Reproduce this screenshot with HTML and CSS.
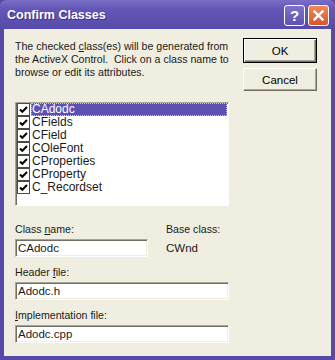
FILE: index.html
```html
<!DOCTYPE html>
<html lang="en">
<head>
  <meta charset="UTF-8" />
  <title>Confirm Classes</title>
  <link rel="stylesheet" href="styles.css">
</head>
<body>

<div class="window">
  <div class="titlebar">
    <span class="title">Confirm Classes</span>
    <div class="caption-btns">
      <span class="cbtn help">?</span>
      <span class="cbtn close">
        <svg width="11" height="11" viewBox="0 0 11 11"><path d="M1.5 1.5 L9.5 9.5 M9.5 1.5 L1.5 9.5" stroke="#fff" stroke-width="2.4" stroke-linecap="square"/></svg>
      </span>
    </div>
  </div>

  <div class="client">
    <div class="main">
      <p class="intro">The checked <u>c</u>lass(es) will be generated from<br>the ActiveX Control.&nbsp; Click on a class name to<br>browse or edit its attributes.</p>

      <div class="listbox">
        <div class="row"><span class="check"><svg width="11" height="11" viewBox="0 0 11 11"><path d="M2 5.5 L4.3 7.8 L9 3" fill="none" stroke="#000" stroke-width="2"/></svg></span><span class="item selected">CAdodc</span></div>
        <div class="row"><span class="check"><svg width="11" height="11" viewBox="0 0 11 11"><path d="M2 5.5 L4.3 7.8 L9 3" fill="none" stroke="#000" stroke-width="2"/></svg></span><span class="item">CFields</span></div>
        <div class="row"><span class="check"><svg width="11" height="11" viewBox="0 0 11 11"><path d="M2 5.5 L4.3 7.8 L9 3" fill="none" stroke="#000" stroke-width="2"/></svg></span><span class="item">CField</span></div>
        <div class="row"><span class="check"><svg width="11" height="11" viewBox="0 0 11 11"><path d="M2 5.5 L4.3 7.8 L9 3" fill="none" stroke="#000" stroke-width="2"/></svg></span><span class="item">COleFont</span></div>
        <div class="row"><span class="check"><svg width="11" height="11" viewBox="0 0 11 11"><path d="M2 5.5 L4.3 7.8 L9 3" fill="none" stroke="#000" stroke-width="2"/></svg></span><span class="item">CProperties</span></div>
        <div class="row"><span class="check"><svg width="11" height="11" viewBox="0 0 11 11"><path d="M2 5.5 L4.3 7.8 L9 3" fill="none" stroke="#000" stroke-width="2"/></svg></span><span class="item">CProperty</span></div>
        <div class="row"><span class="check"><svg width="11" height="11" viewBox="0 0 11 11"><path d="M2 5.5 L4.3 7.8 L9 3" fill="none" stroke="#000" stroke-width="2"/></svg></span><span class="item">C_Recordset</span></div>
      </div>

      <div class="name-row">
        <div class="name-col">
          <div class="label">Class <u>n</u>ame:</div>
          <div class="textbox">CAdodc</div>
        </div>
        <div class="base-col">
          <div class="label">Base class:</div>
          <div class="base-value">CWnd</div>
        </div>
      </div>

      <div class="label">Header <u>f</u>ile:</div>
      <div class="textbox">Adodc.h</div>

      <div class="label"><u>I</u>mplementation file:</div>
      <div class="textbox">Adodc.cpp</div>
    </div>

    <div class="side">
      <button class="btn default">OK</button>
      <button class="btn">Cancel</button>
    </div>
  </div>
</div>

</body>
</html>
```

FILE: styles.css
```css
body {
  margin: 0;
  padding: 0;
  font-family: "Liberation Sans", Arial, sans-serif;
  font-size: 10.6px;
  color: #1a1a1a;
  background: #fff;
}

.window {
  width: 335px;
  height: 360px;
  background: #5549a9;
  display: flex;
  flex-direction: column;
}

.titlebar {
  height: 29px;
  display: flex;
  align-items: center;
  justify-content: space-between;
  padding: 0 6px 0 7px;
  background: linear-gradient(#7a6fc6, #6357b6 30%, #5b4fae 80%, #5549a9);
  border-radius: 6px 6px 0 0;
  box-sizing: border-box;
}

.title {
  color: #fff;
  font-weight: bold;
  font-size: 12.5px;
  text-shadow: 1px 1px 0 #3b2f86;
  margin-top: 1px;
}

.caption-btns {
  display: flex;
  gap: 3px;
  margin-top: 1px;
}

.cbtn {
  width: 19px;
  height: 19px;
  border: 1px solid #fff;
  border-radius: 3px;
  display: flex;
  align-items: center;
  justify-content: center;
  color: #fff;
  font-weight: bold;
  font-size: 15px;
}

.help {
  background: linear-gradient(#7d72cc, #5d51b3);
}

.close {
  background: linear-gradient(#ef8a55, #d9572a);
}

.client {
  flex: 1;
  margin: 0 4px 4px 4px;
  background: #f0eee1;
  display: flex;
}

.main {
  width: 214px;
  padding: 11px 0 0 11px;
}

.intro {
  margin: 0 0 23px 0;
  line-height: 13px;
  white-space: nowrap;
}

.listbox {
  height: 104px;
  background: #fff;
  border: 1px solid;
  border-color: #a7a596 #fff #fff #a7a596;
  box-shadow: inset 1px 1px 0 #716f64;
  margin-bottom: 17px;
  box-sizing: border-box;
  font-size: 12px;
}

.row {
  display: flex;
  height: 13px;
  align-items: center;
}

.check {
  width: 11px;
  height: 11px;
  margin: 0 1px 0 1px;
  border: 1px solid #4a4a4a;
  background: #fff;
  display: flex;
}

.item {
  flex: 1;
  height: 13px;
  line-height: 13px;
  padding-left: 1px;
  margin-right: 1px;
  box-sizing: border-box;
}

.item.selected {
  background: #5d52b3;
  color: #fff;
  outline: 1px dotted #c9c2f0;
  outline-offset: -1px;
}

.name-row {
  display: flex;
}

.name-col {
  width: 133px;
  margin-right: 18px;
}

.label {
  line-height: 13px;
  height: 13px;
  margin-bottom: 3px;
  white-space: nowrap;
}

.base-value {
  height: 18px;
  line-height: 18px;
  font-size: 11.5px;
}

.textbox {
  height: 18px;
  line-height: 16px;
  padding: 0 0 0 2px;
  background: #fff;
  border: 1px solid;
  border-color: #a7a596 #fff #fff #a7a596;
  box-shadow: inset 1px 1px 0 #716f64, inset -1px -1px 0 #f0eee1;
  margin-bottom: 9px;
  box-sizing: border-box;
  font-size: 11.5px;
}

.side {
  display: flex;
  flex-direction: column;
  gap: 5px;
  margin-left: 14px;
  padding-top: 9px;
}

.btn {
  width: 74px;
  height: 23px;
  font-family: "Liberation Sans", Arial, sans-serif;
  font-size: 11.5px;
  color: #000;
  background: #f0eee1;
  border: 1px solid;
  border-color: #fff #716f64 #716f64 #fff;
  box-shadow: inset -1px -1px 0 #aca899;
  padding: 0;
}

.btn.default {
  height: 25px;
  outline: 1px solid #000;
  outline-offset: -1px;
  border-color: #000;
  box-shadow: inset 1px 1px 0 #fff, inset -1px -1px 0 #716f64, inset -2px -2px 0 #aca899;
}
```
